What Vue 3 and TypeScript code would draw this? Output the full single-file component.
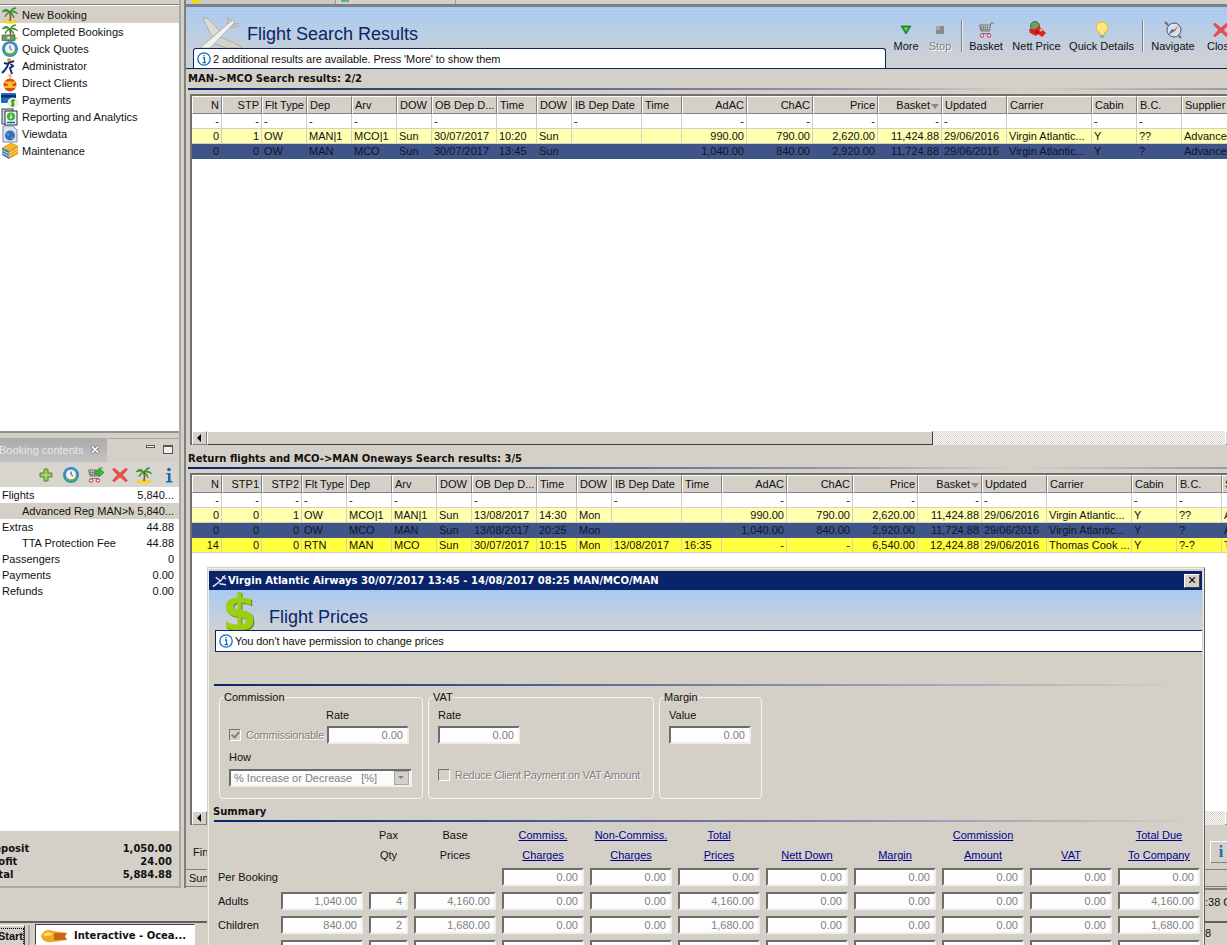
<script setup lang="ts">
interface Col { name: string; w: number; right?: boolean; sort?: boolean }
const base1: Col[] = [
  { name: 'Flt Type', w: 45 }, { name: 'Dep', w: 45 }, { name: 'Arv', w: 45 }, { name: 'DOW', w: 35 },
  { name: 'OB Dep D...', w: 65 }, { name: 'Time', w: 40 }, { name: 'DOW', w: 35 }, { name: 'IB Dep Date', w: 70 },
  { name: 'Time', w: 40 }, { name: 'AdAC', w: 65, right: true }, { name: 'ChAC', w: 66, right: true },
  { name: 'Price', w: 65, right: true }, { name: 'Basket', w: 64, right: true, sort: true }, { name: 'Updated', w: 65 },
  { name: 'Carrier', w: 85 }, { name: 'Cabin', w: 45 }, { name: 'B.C.', w: 45 }
]
const cols1: Col[] = [{ name: 'N', w: 30, right: true }, { name: 'STP', w: 40, right: true }, ...base1, { name: 'Supplier', w: 60 }]
const cols2: Col[] = [{ name: 'N', w: 30, right: true }, { name: 'STP1', w: 40, right: true }, { name: 'STP2', w: 40, right: true }, ...base1, { name: 'Supplier', w: 60 }]
const total = (c: Col[]) => c.reduce((a, x) => a + x.w, 0)

const rows1 = [
  { cls: 'filter', cells: ['-', '-', '-', '-', '-', '', '-', '', '', '-', '', '-', '-', '-', '-', '-', '', '-', '-', ''] },
  { cls: 'pale', cells: ['0', '1', 'OW', 'MAN|1', 'MCO|1', 'Sun', '30/07/2017', '10:20', 'Sun', '', '', '990.00', '790.00', '2,620.00', '11,424.88', '29/06/2016', 'Virgin Atlantic...', 'Y', '??', 'Advanced'] },
  { cls: 'chosen', cells: ['0', '0', 'OW', 'MAN', 'MCO', 'Sun', '30/07/2017', '13:45', 'Sun', '', '', '1,040.00', '840.00', '2,920.00', '11,724.88', '29/06/2016', 'Virgin Atlantic...', 'Y', '?', 'Advanced'] }
]
const rows2 = [
  { cls: 'filter', cells: ['-', '-', '-', '-', '-', '-', '', '-', '', '', '-', '', '-', '-', '-', '-', '-', '', '-', '-', ''] },
  { cls: 'pale', cells: ['0', '0', '1', 'OW', 'MCO|1', 'MAN|1', 'Sun', '13/08/2017', '14:30', 'Mon', '', '', '990.00', '790.00', '2,620.00', '11,424.88', '29/06/2016', 'Virgin Atlantic...', 'Y', '??', 'Advanced'] },
  { cls: 'chosen', cells: ['0', '0', '0', 'OW', 'MCO', 'MAN', 'Sun', '13/08/2017', '20:25', 'Mon', '', '', '1,040.00', '840.00', '2,920.00', '11,724.88', '29/06/2016', 'Virgin Atlantic...', 'Y', '?', 'Advanced'] },
  { cls: 'bright', cells: ['14', '0', '0', 'RTN', 'MAN', 'MCO', 'Sun', '30/07/2017', '10:15', 'Mon', '13/08/2017', '16:35', '-', '-', '6,540.00', '12,424.88', '29/06/2016', 'Thomas Cook ...', 'Y', '?-?', 'Thomas'] }
]

const palm = '<ellipse cx="9" cy="15.5" rx="8" ry="2" fill="#f3d23a"/><path d="M9 15 C10 11 9.5 8 9 6" stroke="#8a5a20" stroke-width="1.8" fill="none"/><path d="M9 6 C6 2 3 3 1 6 C4 5 6 5 9 6 C7 6 4 8 4 11 C6 8 8 7 9 6 C10 3 13 1 15 2 C13 3 11 4 9 6 C12 4 15 5 17 8 C14 6.500 12 6 9 6 C11 7 13 9 13 12 C11 9 10 7 9 6Z" fill="#2f9e2a" stroke="#1d7a1d" stroke-width=".5"/>'
const clock = '<circle cx="9" cy="9" r="8" fill="#2a8fd8"/><path d="M3 13 A8 8 0 0 0 16 11 L13 11 A5 5 0 0 1 5 12Z" fill="#4fb82e"/><circle cx="9" cy="8.500" r="5.300" fill="#f2f2ee" stroke="#777" stroke-width=".6"/><path d="M9 5.500V8.500L11 10" stroke="#444" fill="none"/>'
const basket = '<path d="M17 2H14L12.500 10H4L2.500 4H13" stroke="#777" fill="#ccc" stroke-width="1"/><path d="M4.500 4.500V10M6.500 4.500V10M8.500 4.500V10M10.500 4.500V10M3 6.500H13M3.500 8.500H12.500" stroke="#777" stroke-width=".7"/><circle cx="5" cy="14.500" r="1.700" fill="#fff" stroke="#c22"/><circle cx="12" cy="14.500" r="1.700" fill="#fff" stroke="#c22"/><path d="M5 12.500H13" stroke="#777"/>'
const redX = '<path d="M3 2L9 7L15 2L16.500 3.500L11.500 9L16.500 14.500L15 16L9 11L3 16L1.500 14.500L6.500 9L1.500 3.500Z" fill="#ee4d4d" stroke="#c33" stroke-width=".5"/>'
const icons: Record<string, string> = {
  palm,
  money: palm + '<rect x="1" y="12" width="13" height="5.500" fill="#6f9a5a" stroke="#354" stroke-width=".6"/><circle cx="7.500" cy="14.700" r="1.500" fill="#d9e8c6"/>',
  clock,
  runner: '<circle cx="8" cy="3" r="2" fill="#f09a20"/><path d="M8 5L12 9L9 11L11 17M8 5L6 10L3 14L1 16M8 6L13 4M7 7L3 6" stroke="#1a2a78" stroke-width="2" fill="none"/>',
  clients: '<circle cx="9" cy="11" r="6.500" fill="#e8441c"/><path d="M3 13h12M4 8.500h10" stroke="#f5c526" stroke-width="2"/><circle cx="9" cy="11" r="2.500" fill="#f5c526"/><path d="M7 1H10L8 3H11" stroke="#f09a20" fill="none"/>',
  pay: '<rect x="0" y="2" width="15" height="10" rx="1" fill="#1e6fc0"/><rect x="0" y="4" width="15" height="2.500" fill="#0b2f70"/><circle cx="12" cy="12" r="5.500" fill="#f0f0d8"/><path d="M14 9.500C12 8.500 10 9.500 11 11.500C13 12.500 14 14 11 14.500L10 14M12 8V16" stroke="#2c9a26" stroke-width="1.400" fill="none"/>',
  report: '<rect x="1" y="1" width="11" height="15" fill="#cfd6e4" stroke="#345"/><rect x="4" y="3" width="12" height="14" fill="#eef2f6" stroke="#234"/><circle cx="10" cy="8.500" r="4" fill="#2fb52a"/><path d="M10 6V10M8.500 8.800L10 10.500L11.500 8.800" stroke="#fff" fill="none"/><path d="M6 14.500H14" stroke="#1a6a88" stroke-width="1.500"/>',
  view: '<path d="M2 1H12L16 5V17H2Z" fill="#dfe4ef" stroke="#7a88a8"/><circle cx="9" cy="10.500" r="5" fill="#3568d0"/><path d="M6 8C8 7 9 9 8 10.500C6.500 12 6 10 6 8ZM10 12C12 11 13 12 12 14C10.500 14.500 10 13 10 12Z" fill="#4fb84a"/>',
  maint: '<path d="M1 6L10 1L17 4L8 9Z" fill="#f5b82a" stroke="#b87a10" stroke-width=".5"/><path d="M1 6L8 9V17L1 13Z" fill="#2f7fd0"/><path d="M8 9L17 4V12L8 17Z" fill="#e8a020"/><path d="M8 11.500L17 6.500M8 14L17 9M1 8.500L8 11.500M1 11L8 14" stroke="#fff2a0" stroke-width=".8"/>',
  plus: '<path d="M7 3H11V7H15V11H11V15H7V11H3V7H7Z" fill="#8fc04a" stroke="#5f8a30"/><path d="M9 4.500V13.500M4.500 9H13.500" stroke="#b7dc78"/>',
  basketGo: basket + '<path d="M9 5H13V2L18 6.500L13 11V8H9Z" fill="#2ec42e" stroke="#187a18" stroke-width=".6"/>',
  x: redX,
  info: '<circle cx="9" cy="3.500" r="1.800" fill="#1668b8"/><path d="M6.500 7H10.500V15H12.500V16.500H6V15H8V8.500H6.500Z" fill="#1668b8"/>',
  more: '<path d="M4 5H14L9 13Z" fill="#1c9a26" stroke="#0c6a16" stroke-width=".7"/><path d="M6.500 6.500H11.500L9 10.500Z" fill="#5ad05a"/>',
  stop: '<rect x="5" y="5" width="8" height="8" fill="#8a8a8a"/><rect x="5" y="5" width="4" height="4" fill="#a4a4a4"/>',
  basket,
  nett: '<circle cx="7" cy="5" r="4.500" fill="#6aa060" stroke="#3d6e38"/><path d="M1 8H8L11 5L18 12L14 16L10 13L8 15L2 12Z" fill="#e0201c"/><circle cx="13" cy="9" r="1.500" fill="#f8a0a0"/><circle cx="9" cy="11" r="1.500" fill="#a01010"/>',
  bulb: '<path d="M9 1A5.500 5.500 0 0 0 6.500 11.500V14H11.500V11.500A5.500 5.500 0 0 0 9 1Z" fill="#ffe680" stroke="#e8b820"/><rect x="7" y="14" width="4" height="3" fill="#8ab0d0"/>',
  nav: '<circle cx="10" cy="9" r="7" fill="#cfe3f5" stroke="#555"/><path d="M4 14L10 9L15 4L11 10Z" fill="#e23a2a"/><path d="M4 14L10 9L8 8Z" fill="#2a6ac0"/><path d="M1 1L4 4M15 15L17 17" stroke="#765" stroke-width="2"/>',
  xTool: redX
}

const nav = [
  ['palm', 'New Booking'], ['money', 'Completed Bookings'], ['clock', 'Quick Quotes'], ['runner', 'Administrator'],
  ['clients', 'Direct Clients'], ['pay', 'Payments'], ['report', 'Reporting and Analytics'], ['view', 'Viewdata'], ['maint', 'Maintenance']
]
const contents = [
  { label: 'Flights', value: '5,840...' },
  { label: 'Advanced Reg MAN>MCO/MAN', value: '5,840...', indent: true, active: true },
  { label: 'Extras', value: '44.88' },
  { label: 'TTA Protection Fee', value: '44.88', indent: true },
  { label: 'Passengers', value: '0' },
  { label: 'Payments', value: '0.00' },
  { label: 'Refunds', value: '0.00' }
]
const totals = [['Deposit', '1,050.00'], ['Profit', '24.00'], ['Total', '5,884.88']]
const boxTools = ['plus', 'clock', 'basketGo', 'x', 'palm', 'info']
const tools = [
  { icon: 'more', label: 'More', w: 24 }, { icon: 'stop', label: 'Stop', w: 22, off: true }, { sep: true },
  { icon: 'basket', label: 'Basket', w: 32 }, { icon: 'nett', label: 'Nett Price', w: 47 }, { icon: 'bulb', label: 'Quick Details', w: 61 }, { sep: true },
  { icon: 'nav', label: 'Navigate', w: 44 }, { icon: 'xTool', label: 'Close', w: 30 }
]
const heads = [
  ['Pax', 'Qty', false], ['Base', 'Prices', false], ['Commiss.', 'Charges', true], ['Non-Commiss.', 'Charges', true], ['Total', 'Prices', true],
  ['', 'Nett Down', true], ['', 'Margin', true], ['Commission', 'Amount', true], ['', 'VAT', true], ['Total Due', 'To Company', true]
] as [string, string, boolean][]
const z = '0.00'
const summary = [
  { label: 'Per Booking', vals: ['', '', '', z, z, z, z, z, z, z, z] },
  { label: 'Adults', vals: ['1,040.00', '4', '4,160.00', z, z, '4,160.00', z, z, z, z, '4,160.00'] },
  { label: 'Children', vals: ['840.00', '2', '1,680.00', z, z, '1,680.00', z, z, z, z, '1,680.00'] },
  { label: 'Infants', vals: [z, '0', z, z, z, z, z, z, z, z, z] }
]
</script>

<template>
  <div class="desk">
    <div class="work">
      <aside class="left">
        <div class="nav">
          <div v-for="(n, i) in nav" :key="n[1]" class="nav-row" :class="{ on: i === 0 }">
            <svg class="ic" viewBox="0 0 18 18" v-html="icons[n[0]]"></svg>
            <span>{{ n[1] }}</span>
          </div>
        </div>
        <div class="box-tabs">
          <div class="box-tab"><span class="box-name">Booking contents</span><span class="box-x">✕</span></div>
          <div class="box-ctl"><i class="min"></i><i class="max"></i></div>
        </div>
        <div class="box-tools">
          <svg v-for="t in boxTools" :key="t" class="ic" viewBox="0 0 18 18" v-html="icons[t]"></svg>
        </div>
        <div class="list">
          <div v-for="c in contents" :key="c.label" class="list-row" :class="{ on: c.active, indent: c.indent }">
            <span class="l">{{ c.label }}</span><span class="v">{{ c.value }}</span>
          </div>
        </div>
        <div class="totals">
          <div v-for="t in totals" :key="t[0]" class="tot"><span>{{ t[0] }}</span><span>{{ t[1] }}</span></div>
        </div>
      </aside>

      <main class="right">
        <div class="strip"><i class="yel"></i><i class="tabend"></i><i class="tabico"></i><i class="tabend2"></i></div>
        <header class="banner">
          <div class="ban-left">
            <div class="ban-title">
              <svg class="plane" viewBox="0 0 44 32">
                <path d="M12 21L3 2L7 2L20 15Z" fill="#dcdcd4" stroke="#98988e" stroke-width=".6"/>
                <path d="M18 20L41 30V32H27L13 27Z" fill="#d4d4cc" stroke="#98988e" stroke-width=".6"/>
                <path d="M28 8L27 2H29L33 7ZM31 9L38 7V10L31 12Z" fill="#c8c8c0" stroke="#98988e" stroke-width=".5"/>
                <path d="M0 32L29 7C32 4 35 4 34 7L10 32Z" fill="#f2f2ec" stroke="#98988e" stroke-width=".6"/>
              </svg>
              <h1>Flight Search Results</h1>
            </div>
            <div class="info-box">
              <svg class="i-ic" viewBox="0 0 14 14"><circle cx="7" cy="7" r="6.200" fill="#fff" stroke="#1668b8" stroke-width="1.300"/><path d="M7 3V4.500M5.800 6H7.500V10.500M5.500 10.700H9" stroke="#1668b8" stroke-width="1.300" fill="none"/></svg>
              <span>2 additional results are available. Press 'More' to show them</span>
            </div>
          </div>
          <div class="tools">
            <template v-for="(t, i) in tools" :key="i">
              <i v-if="t.sep" class="tsep"></i>
              <div v-else class="tool" :class="{ off: t.off }" :style="{ width: t.w + 'px' }">
                <svg class="ic" viewBox="0 0 18 18" v-html="icons[t.icon as string]"></svg>
                <span>{{ t.label }}</span>
              </div>
            </template>
          </div>
        </header>

        <h2 class="sec">MAN-&gt;MCO Search results: 2/2</h2>
        <div class="rule"></div>
        <section class="frame f1">
          <div class="grid-wrap">
            <table :style="{ width: total(cols1) + 'px' }">
              <colgroup><col v-for="(c, i) in cols1" :key="i" :style="{ width: c.w + 'px' }" /></colgroup>
              <thead><tr><th v-for="(c, i) in cols1" :key="i" :class="{ r: c.right }">{{ c.name }}<i v-if="c.sort" class="tri"></i></th></tr></thead>
              <tbody>
                <tr v-for="(r, ri) in rows1" :key="ri" :class="r.cls"><td v-for="(v, ci) in r.cells" :key="ci" :class="{ r: cols1[ci].right }">{{ v }}</td></tr>
              </tbody>
            </table>
          </div>
          <div class="hbar"><b class="arrow"></b><b class="thumb t1"></b><span class="track"></span><b class="arrow-r"></b></div>
        </section>

        <h2 class="sec s2">Return flights and MCO-&gt;MAN Oneways Search results: 3/5</h2>
        <div class="rule"></div>
        <section class="frame f2">
          <div class="grid-wrap">
            <table :style="{ width: total(cols2) + 'px' }">
              <colgroup><col v-for="(c, i) in cols2" :key="i" :style="{ width: c.w + 'px' }" /></colgroup>
              <thead><tr><th v-for="(c, i) in cols2" :key="i" :class="{ r: c.right }">{{ c.name }}<i v-if="c.sort" class="tri"></i></th></tr></thead>
              <tbody>
                <tr v-for="(r, ri) in rows2" :key="ri" :class="r.cls"><td v-for="(v, ci) in r.cells" :key="ci" :class="{ r: cols2[ci].right }">{{ v }}</td></tr>
              </tbody>
            </table>
          </div>
          <div class="hbar"><b class="arrow"></b><span class="track"></span><b class="arrow-r"></b></div>
        </section>

        <div class="find"><span>Find</span><b class="i-btn">i</b></div>
        <div class="sum-tab">Summary</div>
      </main>
    </div>

    <div class="status"><span>:38 GMT+1</span></div>
    <footer class="taskbar">
      <div class="start"><span>Start</span></div>
      <i class="bar-sep"></i>
      <div class="task">
        <svg class="blob" viewBox="0 0 28 14"><path d="M1 7C3 1 9 0 13 2C17 3 23 3 27 4C24 6 24 9 27 11C20 12 16 13 11 13C6 14 2 11 1 7Z" fill="#f0a820"/><path d="M3 6C6 2 10 3 13 5C10 7 6 8 3 6Z" fill="#ffe070"/><path d="M14 4H27L25 7.500L27 11H14Z" fill="#c8661a"/></svg>
        <span>Interactive - Ocea...</span>
      </div>
      <span class="tray">8</span>
    </footer>

    <div class="dialog">
      <div class="d-title">
        <svg class="d-plane" viewBox="0 0 16 14"><path d="M1 13L9 7L14 1M4 3L9 7M8 10L15 11M11 2L15 5" stroke="#e8e8e8" stroke-width="1.500" fill="none"/></svg>
        <span>Virgin Atlantic Airways 30/07/2017 13:45 - 14/08/2017 08:25 MAN/MCO/MAN</span>
        <b class="d-x">✕</b>
      </div>
      <div class="d-banner">
        <span class="dollar">$</span>
        <h1>Flight Prices</h1>
      </div>
      <div class="d-info">
        <svg class="i-ic" viewBox="0 0 14 14"><circle cx="7" cy="7" r="6.200" fill="#fff" stroke="#1668b8" stroke-width="1.300"/><path d="M7 3V4.500M5.800 6H7.500V10.500M5.500 10.700H9" stroke="#1668b8" stroke-width="1.300" fill="none"/></svg>
        <span>You don't have permission to change prices</span>
      </div>
      <div class="d-rule"></div>
      <div class="groups">
        <fieldset class="g g1">
          <legend>Commission</legend>
          <div class="g-rate">Rate</div>
          <div class="g-line">
            <i class="chk on"></i><span class="dim">Commissionable</span>
            <div class="inp">0.00</div>
          </div>
          <div class="g-how">How</div>
          <div class="combo"><span>% Increase or Decrease&nbsp;&nbsp;&nbsp;[%]</span><b></b></div>
        </fieldset>
        <fieldset class="g g2">
          <legend>VAT</legend>
          <div class="g-lab">Rate</div>
          <div class="inp top">0.00</div>
          <div class="g-vat"><i class="chk"></i><span class="dim">Reduce Client Payment on VAT Amount</span></div>
        </fieldset>
        <fieldset class="g g3">
          <legend>Margin</legend>
          <div class="g-lab">Value</div>
          <div class="inp top">0.00</div>
        </fieldset>
      </div>
      <h3 class="s-head">Summary</h3>
      <div class="d-rule s-rule"></div>
      <div class="s-grid">
        <span></span><span></span>
        <div v-for="(h, i) in heads" :key="i" class="s-h" :class="{ link: h[2] }">
          <span>{{ h[0] }}</span><span>{{ h[1] }}</span>
        </div>
        <template v-for="row in summary" :key="row.label">
          <span class="s-l">{{ row.label }}</span>
          <template v-for="(v, i) in row.vals" :key="i">
            <div v-if="row.label !== 'Per Booking' || i > 2" class="inp full">{{ v }}</div>
            <span v-else></span>
          </template>
        </template>
      </div>
    </div>
  </div>
</template>

<style scoped>
.desk { position: relative; width: 1227px; height: 945px; overflow: hidden; background: #d4d0c8; font: 11px/14px "Liberation Sans", sans-serif; color: #111; }
.work { display: flex; height: 888px; }
h1, h2, h3 { margin: 0; }
i, b { display: block; }
.ic { width: 18px; height: 18px; flex: none; }

.left { width: 181px; flex: none; box-sizing: border-box; display: flex; flex-direction: column; border-right: 2px solid #a8a8a8; border-bottom: 2px solid #a8a8a8; overflow: hidden; }
.nav { height: 429px; flex: none; box-sizing: border-box; margin-top: 4px; border-top: 1px solid #808080; border-bottom: 2px solid #909090; background: #fff; padding-top: 1px; }
.nav-row { height: 17px; display: flex; align-items: center; gap: 3px; padding-left: 1px; }
.nav-row.on { background: #d4d0c8; }
.box-tabs { height: 24px; flex: none; margin-top: 5px; display: flex; }
.box-tab { width: 107px; background: linear-gradient(#aaa, #c4c4c4); color: #e8e8e8; display: flex; align-items: center; justify-content: space-between; padding-right: 7px; box-sizing: border-box; border-top-right-radius: 3px; }
.box-name { margin-left: -1px; }
.box-x { color: #fff; font-weight: bold; font-size: 12px; text-shadow: 0 0 1px #222, 0 0 1px #222; }
.box-ctl { flex: 1; border-top: 1px solid #a8a8a8; display: flex; align-items: flex-start; padding: 6px 5px 0 39px; gap: 8px; }
.min { width: 9px; height: 3px; border: 1px solid #555; background: #fff; margin-top: 0; box-sizing: border-box; }
.max { width: 10px; height: 9px; border: 1px solid #555; border-top-width: 2px; box-sizing: border-box; background: #eee; }
.box-tools { height: 25px; flex: none; background: #d8d5ce; display: flex; align-items: center; gap: 6.500px; padding-left: 37px; }
.list { flex: 1; background: #fff; padding-top: 0; }
.list-row { height: 16px; display: flex; align-items: center; padding: 0 5px 0 2px; }
.list-row.on { background: #d4d0c8; }
.list-row.indent { padding-left: 22px; }
.list-row .l { flex: 1; min-width: 0; white-space: nowrap; overflow: hidden; }
.list-row .v { width: 40px; flex: none; text-align: right; }
.totals { height: 55px; flex: none; box-sizing: border-box; padding: 11px 7px 0 0; margin-left: -14px; font: bold 10px/13px "DejaVu Sans", sans-serif; }
.tot { display: flex; justify-content: space-between; height: 13px; line-height: 13px; }

.right { flex: 1; min-width: 0; margin-left: 3px; border-left: 2px solid #808080; display: flex; flex-direction: column; overflow: hidden; }
.strip { height: 7px; flex: none; box-sizing: border-box; border-bottom: 3px solid #808080; display: flex; background: linear-gradient(90deg, #c8c8c8 149px, #d4d0c8 149px); }
.yel { width: 8px; height: 3px; background: #f5d800; margin-left: 6px; }
.tabend { width: 1px; height: 4px; margin-left: 135px; background: #999; }
.tabico { width: 8px; height: 2px; background: #6a9; margin-left: 5px; }
.tabend2 { width: 1px; height: 4px; margin-left: 106px; background: #999; }
.banner { height: 62px; flex: none; display: flex; box-sizing: border-box; border-bottom: 1px solid #0a246a; background: repeating-linear-gradient(transparent 0 2px, rgba(255,255,255,.07) 2px 3px), linear-gradient(#a8c9f2, #cdd0d2 90%); }
.ban-left { width: 708px; flex: none; display: flex; flex-direction: column; justify-content: flex-end; }
.ban-title { display: flex; align-items: flex-end; height: 40px; padding-left: 14px; margin-bottom: 0; }
.plane { width: 44px; height: 32px; margin-bottom: 0; }
.ban-title h1 { font: 18px/21px "Liberation Sans", sans-serif; color: #0a246a; margin: 0 0 3px 3px; }
.info-box { width: 693px; height: 20px; margin-left: 7px; box-sizing: border-box; background: #fff; border: 1px solid #0a246a; border-bottom: 0; border-radius: 3px 3px 0 0; display: flex; align-items: center; gap: 2px; padding-left: 3px; letter-spacing: -.08px; }
.i-ic { width: 14px; height: 14px; flex: none; }
.tools { display: flex; flex: 1; padding-top: 14px; gap: 11px; }
.tool { display: flex; flex-direction: column; align-items: center; flex: none; height: 33px; white-space: nowrap; }
.tool.off span { color: #808080; text-shadow: 1px 1px #fff; }
.tsep { width: 1px; height: 32px; margin: -1px -4px 0 -1px; background: #808080; border-right: 1px solid #eee; flex: none; }

.sec { font: bold 10px/19px "DejaVu Sans", sans-serif; height: 19px; flex: none; padding-left: 2px; white-space: nowrap; }
.s2 { margin-top: 4px; height: 18px; }
.rule { height: 2px; flex: none; margin-left: 2px; background: linear-gradient(90deg, #0a246a, #8c93ad 60%, #d4d0c8 80%, #9a9aa6); }
.frame { margin: 4px 0 0 4px; flex: none; box-sizing: border-box; border-top: 2px solid #707070; border-left: 2px solid #707070; display: flex; flex-direction: column; background: #fff; overflow: hidden; }
.f1 { height: 351px; }
.f2 { height: 352px; }
.grid-wrap { flex: 1; overflow: hidden; }
table { table-layout: fixed; border-collapse: separate; border-spacing: 0; }
th { height: 18px; padding: 0 2px; box-sizing: border-box; background: #d4d0c8; font-weight: normal; text-align: left; white-space: nowrap; overflow: hidden; border-top: 1px solid #fff; border-left: 1px solid #fff; border-right: 1px solid #808080; border-bottom: 1px solid #808080; position: relative; }
td { height: 15px; padding: 0 2px; box-sizing: border-box; line-height: 14px; white-space: nowrap; overflow: hidden; border-right: 1px solid #d4d0c8; border-bottom: 1px solid #d4d0c8; }
.r { text-align: right; }
.tri { display: inline-block; width: 0; height: 0; border: 4px solid transparent; border-top: 5px solid #8a8a8a; border-bottom: 0; margin-left: 1px; vertical-align: middle; }
.pale td { background: #ffffb0; }
.chosen td { background: #3f5587; color: #10142a; border-color: #3f5587; }
.bright td { background: #ffff40; }
.hbar { height: 14px; flex: none; display: flex; background: #d4d0c8; }
.arrow, .arrow-r { width: 15px; box-sizing: border-box; border: 1px solid; border-color: #fff #808080 #808080 #fff; position: relative; flex: none; }
.arrow-r { margin-right: -13px; }
.arrow::after { content: ""; position: absolute; left: 4px; top: 2px; border: 4px solid transparent; border-right: 4px solid #000; border-left: 0; }
.thumb { box-sizing: border-box; border: 1px solid; border-color: #fff #404040 #404040 #fff; background: #d4d0c8; }
.t1 { width: 726px; flex: none; }
.track { flex: 1; background: repeating-conic-gradient(#fff 0 25%, #d4d0c8 0 50%) 0 0 / 2px 2px; }
.find { height: 44px; flex: none; display: flex; justify-content: space-between; align-items: center; padding: 10px 0 0 7px; box-sizing: border-box; }
.i-btn { width: 20px; height: 20px; margin: 0 -5px 0 auto; background: #d4d0c8; border: 1px solid; border-color: #fff #808080 #808080 #fff; color: #1668b8; text-align: center; font: bold 16px/20px "Liberation Serif", serif; }
.sum-tab { height: 18px; flex: none; box-sizing: border-box; border-top: 1px solid #808080; padding: 1px 0 0 3px; border-bottom: 1px solid #808080; }

.status { height: 33px; box-sizing: border-box; border-top: 2px solid #808080; margin-left: 1205px; line-height: 24px; white-space: nowrap; overflow: hidden; }
.taskbar { height: 24px; box-sizing: border-box; border-top: 2px solid #606060; background: #d4d0c8; display: flex; align-items: flex-end; position: relative; }
.start { width: 25px; height: 20px; overflow: hidden; display: flex; justify-content: flex-end; font-weight: bold; box-sizing: border-box; border-right: 1px solid #404040; border-top: 1px solid #fff; padding: 3px 1px 0 0; }
.start span { outline: 1px dotted #000; line-height: 14px; }
.bar-sep { width: 2px; height: 20px; margin: 0 5px 0 3px; background: #b0aca4; }
.task { width: 160px; height: 21px; margin-left: 0; box-sizing: border-box; border: 1px solid; border-color: #404040 #fff #fff #404040; background: #fff; display: flex; align-items: center; gap: 6px; padding: 3px 0 0 4px; font: bold 10px/14px "DejaVu Sans", sans-serif; white-space: nowrap; overflow: hidden; }
.blob { width: 28px; height: 14px; flex: none; }
.tray { position: absolute; left: 1205px; top: 3px; }

.dialog { position: absolute; left: 207px; top: 567px; width: 998px; height: 400px; box-sizing: border-box; padding: 3px 2px 3px 1px; background: #d4d0c8; border: 1px solid; border-color: #d4d0c8 #606060 #606060 #d4d0c8; outline: 1px solid #f0efeb; outline-offset: -2px; overflow: hidden; }
.d-title { height: 19px; background: #0a246a; color: #fff; font: bold 10px/19px "DejaVu Sans", sans-serif; letter-spacing: .03px; display: flex; align-items: center; padding-left: 3px; gap: 1px; }
.d-plane { width: 15px; height: 14px; flex: none; }
.d-x { margin-left: auto; width: 16px; height: 14px; margin-right: 2px; background: #d4d0c8; color: #000; border: 1px solid; border-color: #fff #404040 #404040 #fff; box-sizing: border-box; font: bold 11px/12px "DejaVu Sans", sans-serif; text-align: center; }
.d-banner { height: 40px; display: flex; align-items: flex-end; overflow: hidden; background: linear-gradient(#a9c9f2, #cfd2d4); padding-left: 15px; }
.dollar { font: bold 50px/46px "DejaVu Sans", sans-serif; color: #9ccf14; text-shadow: 1px 1px 0 #5a8a10; width: 36px; margin: 0 0 -6px -2px; padding-right: 2px; }
.d-banner h1 { font: 18px/22px "Liberation Sans", sans-serif; color: #0a246a; margin: 0 0 2px 9px; }
.d-info { height: 22px; box-sizing: border-box; background: #fff; margin-left: 6px; border-left: 1px solid #0a246a; border-top: 1px solid #0a246a; border-bottom: 1px solid #0a246a; display: flex; align-items: center; gap: 2px; padding-left: 3px; letter-spacing: -.08px; }
.d-rule { height: 2px; margin: 32px 15px 0 5px; background: linear-gradient(90deg, #0a246a, #7f88a8 55%, #d4d0c8); }
.groups { display: flex; gap: 5px; margin: 5px 0 0 10px; }
.g { margin: 0; padding: 0; min-width: 0; box-sizing: border-box; height: 108px; border: 1px solid #f5f5f2; border-radius: 4px; position: relative; }
.g legend { padding: 0; margin-left: -5px; line-height: 13px; font-size: 11px; }
.g1 { width: 204px; padding: 4px 9px 0; }
.g2 { width: 226px; padding: 4px 9px 0; }
.g3 { width: 103px; padding: 4px 9px 0; }
.g-rate { padding-left: 97px; }
.g-line { display: flex; align-items: center; margin-top: 4px; }
.g-line .inp { margin-left: auto; margin-right: 4px; }
.g-how { margin-top: 6px; }
.g-lab { height: 14px; }
.top { margin-top: 4px; }
.g-vat { display: flex; align-items: center; margin-top: 24px; gap: 5px; }
.dim { color: #808080; text-shadow: 1px 1px #fff; white-space: nowrap; letter-spacing: -.25px; }
.chk { width: 12px; height: 12px; box-sizing: border-box; border: 1px solid; border-color: #707070 #fff #fff #707070; flex: none; position: relative; }
.g-line .chk { margin-right: 5px; }
.chk.on { background: #d4d0c8; }
.chk.on::after { content: ""; position: absolute; left: 3px; top: 0; width: 3px; height: 6px; border: solid #808080; border-width: 0 2px 2px 0; transform: rotate(40deg); }
.inp { width: 82px; height: 18px; flex: none; box-sizing: border-box; background: #fdfdfd; border: 2px solid; border-color: #6c6c6c #f0efeb #f0efeb #6c6c6c; color: #808080; text-align: right; padding-right: 4px; line-height: 14px; }
.combo { width: 183px; height: 18px; box-sizing: border-box; margin-top: 5px; border: 2px solid; border-color: #6c6c6c #f0efeb #f0efeb #6c6c6c; background: #fbfbfb; color: #808080; display: flex; align-items: center; justify-content: space-between; padding-left: 3px; line-height: 14px; }
.combo b { width: 15px; height: 14px; background: #d4d0c8; border: 1px solid #a8a8a8; box-sizing: border-box; position: relative; margin-right: 1px; }
.combo b::after { content: ""; position: absolute; left: 3px; top: 4px; border: 3px solid transparent; border-top: 3px solid #808080; border-bottom: 0; }
.s-head { font: bold 10px/14px "DejaVu Sans", sans-serif; margin: 6px 0 0 4px; }
.s-rule { margin-top: 1px; margin-right: 0; background: linear-gradient(90deg, #0a246a, #7f88a8 60%, #d4d0c8); }
.s-grid { display: grid; grid-template-columns: 57px 82px 39px 82px repeat(8, 82px); column-gap: 6px; row-gap: 6px; grid-template-rows: 37px; grid-auto-rows: 18px; padding-left: 9px; margin-top: 3px; }
.s-grid > span:nth-child(1), .s-grid > span:nth-child(2) { grid-row: 1; height: 37px; }
.s-h { display: flex; flex-direction: column; align-items: center; height: 40px; line-height: 20px; grid-row: 1; white-space: nowrap; }
.s-h span { min-height: 20px; }
.s-h.link span { color: #00008b; text-decoration: underline; }
.s-l { line-height: 18px; white-space: nowrap; }
.full { width: 100%; }
</style>

<style>
html, body { margin: 0; background: #d4d0c8; }
</style>
